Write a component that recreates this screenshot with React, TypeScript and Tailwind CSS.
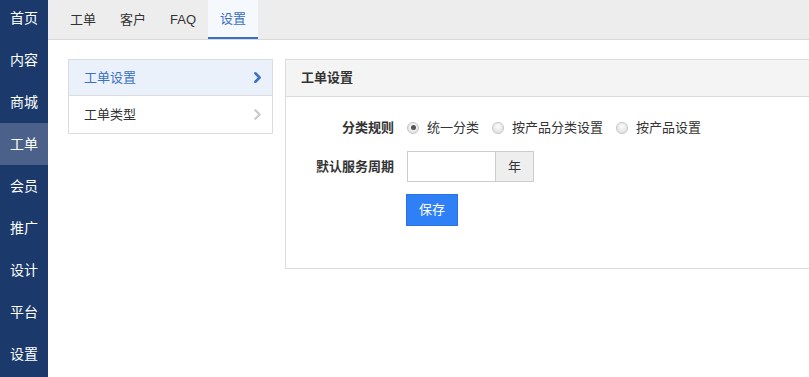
import { ChevronRight } from 'lucide-react'

const navItems = ['首页', '内容', '商城', '工单', '会员', '推广', '设计', '平台', '设置']
const tabs = ['工单', '客户', 'FAQ', '设置']

function Radio({ checked, label }: { checked?: boolean; label: string }) {
  return (
    <label className="flex items-center gap-[8px]">
      <span className="flex size-[12px] items-center justify-center rounded-full border border-[#c4c4c4] bg-[radial-gradient(circle_at_50%_35%,#fafafa,#dcdcdc)]">
        {checked && <span className="size-[5px] rounded-full bg-[#555]" />}
      </span>
      <span>{label}</span>
    </label>
  )
}

export default function App() {
  return (
    <div className="flex h-[377px] w-[809px] overflow-hidden bg-white font-['Liberation_Sans','Noto_Sans_CJK_SC',sans-serif] text-[13px] text-[#333]">
      <aside className="flex w-[48px] shrink-0 flex-col bg-[#1b3a6b]">
        <div className="-mt-[3px] flex flex-col">
          {navItems.map((item, i) => (
            <div
              key={item}
              className={
                i === 3
                  ? 'flex h-[42px] items-center justify-center bg-[#4b618a] text-[14px] text-white'
                  : 'flex h-[42px] items-center justify-center text-[14px] text-white'
              }
            >
              {item}
            </div>
          ))}
        </div>
      </aside>

      <main className="flex min-w-0 flex-1 flex-col">
        <nav className="flex h-[40px] shrink-0 border-b border-[#d9d9d9] bg-[#ededed] pl-[10px]">
          {tabs.map((tab, i) => (
            <div
              key={tab}
              className={
                i === 3
                  ? 'flex h-[39px] items-center border-b-2 border-[#3a6fc4] bg-[#f5f8fc] px-[12px] pt-[1px] text-[#3a6fc4]'
                  : 'flex h-[39px] items-center px-[12px] pt-[1px]'
              }
            >
              {tab}
            </div>
          ))}
        </nav>

        <div className="flex items-start gap-[12px] pl-[20px] pt-[19px]">
          <div className="w-[205px] shrink-0 border border-[#dcdcdc]">
            <div className="flex h-[36px] items-center justify-between border-b border-[#dcdcdc] bg-[#eaf1fa] pl-[15px] pr-[6px] text-[#3b72c6]">
              <span>工单设置</span>
              <ChevronRight size={17} strokeWidth={3.5} className="text-[#3b72c6]" />
            </div>
            <div className="flex h-[37px] items-center justify-between pl-[15px] pr-[6px]">
              <span>工单类型</span>
              <ChevronRight size={17} strokeWidth={3} className="text-[#c8c8c8]" />
            </div>
          </div>

          <section className="w-[600px] shrink-0 border border-[#dcdcdc]">
            <div className="flex h-[37px] items-center border-b border-[#dcdcdc] bg-[#f4f4f4] pl-[15px] font-bold">
              工单设置
            </div>
            <div className="flex flex-col gap-[8px] pb-[42px] pt-[15px]">
              <div className="flex h-[31px] items-center gap-[13px]">
                <div className="w-[108px] text-right font-bold">分类规则</div>
                <div className="flex items-center gap-[13px]">
                  <Radio checked label="统一分类" />
                  <Radio label="按产品分类设置" />
                  <Radio label="按产品设置" />
                </div>
              </div>
              <div className="flex h-[31px] items-center gap-[13px]">
                <div className="w-[108px] text-right font-bold">默认服务周期</div>
                <div className="flex h-[31px]">
                  <input className="h-full w-[89px] border border-[#cccccc] px-2 outline-none" />
                  <span className="flex h-full w-[38px] items-center justify-center border border-l-0 border-[#cccccc] bg-[#eeeeee]">
                    年
                  </span>
                </div>
              </div>
              <div className="mt-[4px] flex gap-[13px]">
                <div className="w-[108px]" />
                <button className="-ml-px h-[32px] w-[52px] border border-[#2a72e0] bg-[#2f80f6] text-white">
                  保存
                </button>
              </div>
            </div>
          </section>
        </div>
      </main>
    </div>
  )
}
